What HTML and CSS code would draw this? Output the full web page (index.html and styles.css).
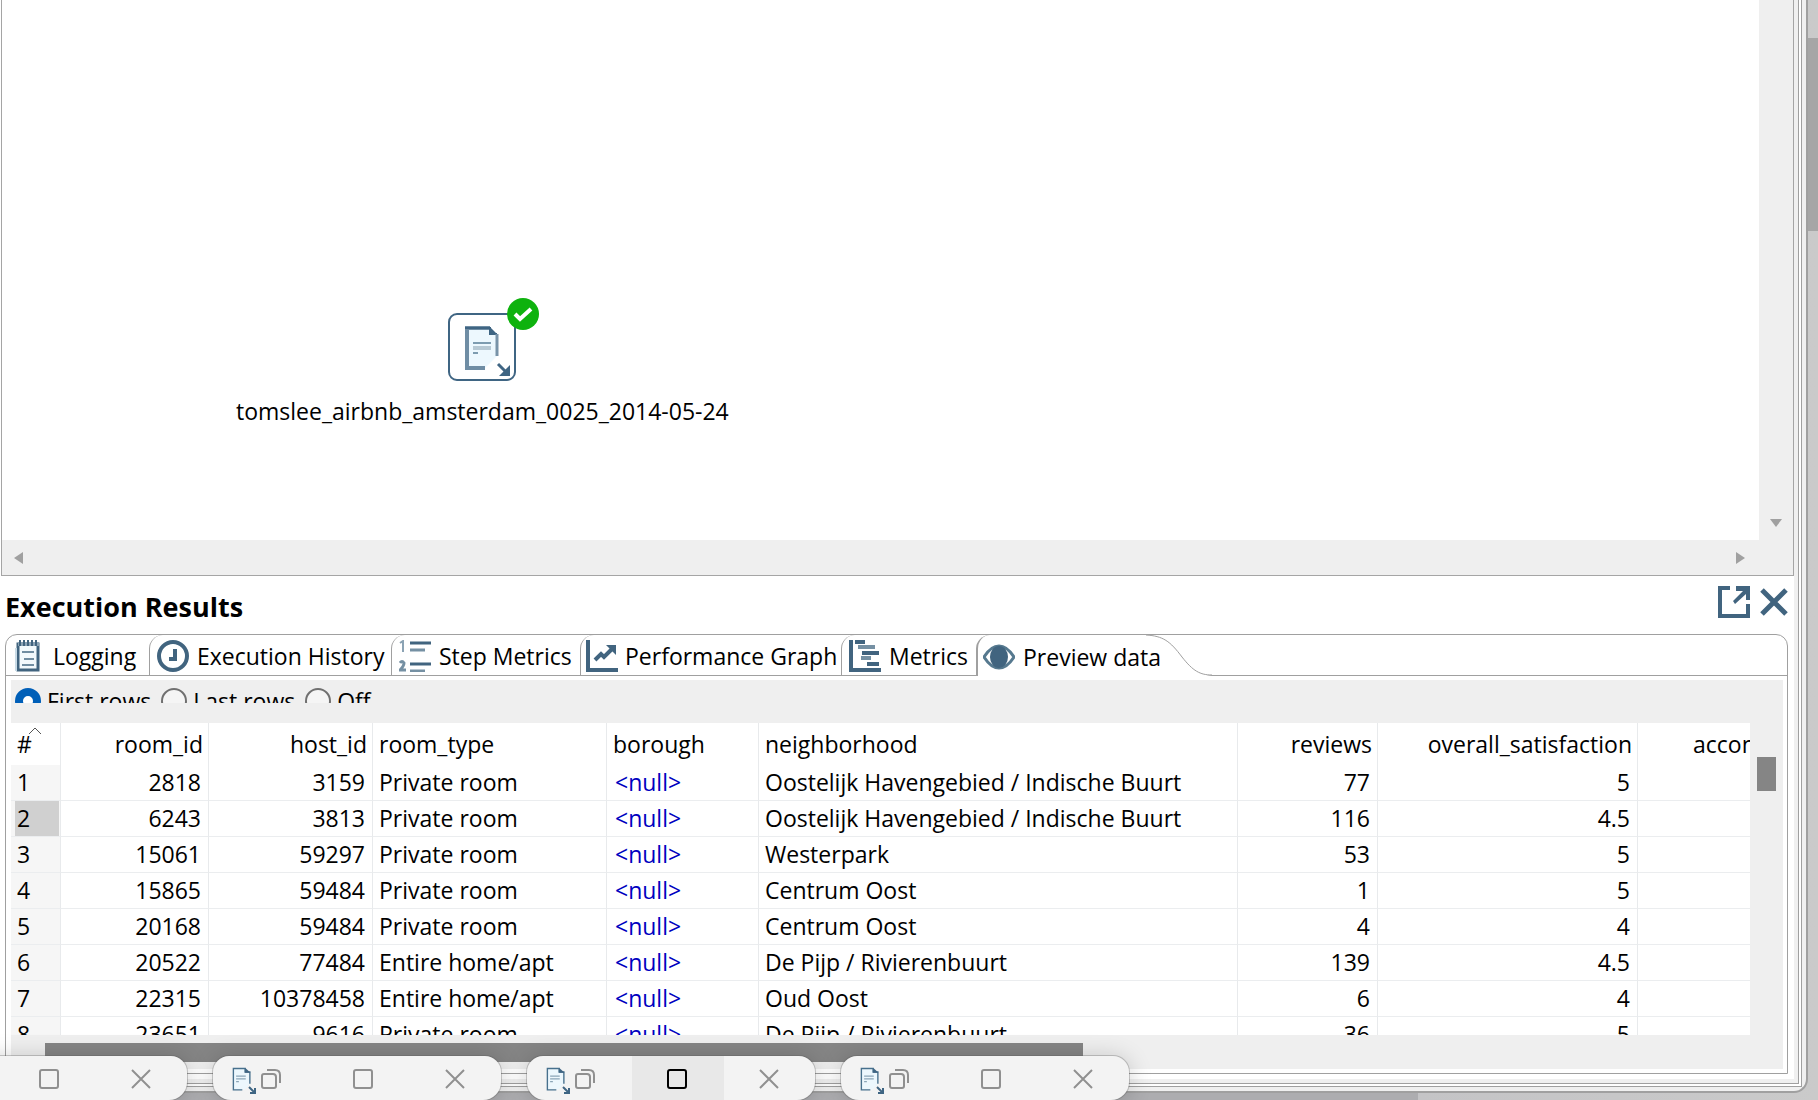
FILE: index.html
```html
<!DOCTYPE html>
<html lang="en">
<head>
<meta charset="utf-8">
<title>Execution Results</title>
<link rel="stylesheet" href="styles.css">
</head>
<body>
<svg class="defs" aria-hidden="true">
  <symbol id="doc" viewBox="0 0 32 36">
    <path d="M2 2H20L26 8V24L18 33H2Z" fill="#ecf7fd"/>
    <path d="M15 33H2V2H19V7H26V24" fill="none" stroke="#47708d" stroke-width="2"/>
    <path d="M19 1L27 8H19Z" fill="#3f6583"/>
    <path d="M6 13H20M6 17H20M6 21H10" fill="none" stroke="#8aa5b7" stroke-width="2"/>
  </symbol>
  <symbol id="copies" viewBox="0 0 20 22">
    <path d="M1 8Q1 6 3 6H12Q15 6 15 9V18Q15 20 13 20H3Q1 20 1 18ZM6 2H14Q19 2 19 7V15" fill="none" stroke="currentColor" stroke-width="2"/>
  </symbol>
  <symbol id="square" viewBox="0 0 20 22">
    <rect x="1" y="2" width="18" height="18" rx="2" fill="none" stroke="currentColor" stroke-width="2"/>
  </symbol>
  <symbol id="cross" viewBox="0 0 20 22">
    <path d="M1 2L19 20M19 2L1 20" fill="none" stroke="currentColor" stroke-width="2"/>
  </symbol>
</svg>

<div class="desktop">
  <main class="window">
    <div class="frame">
      <section class="canvas">
        <div class="canvas-area">
          <div class="node">
            <svg class="node-icon" viewBox="0 0 68 68" aria-hidden="true">
              <rect x="1" y="1" width="66" height="66" rx="8" fill="#fff" stroke="#3f6583" stroke-width="2"/>
              <path d="M18 15H42V20H49V43L36 56H18Z" fill="#edf8fe"/>
              <path d="M37 55H19V15H42" fill="none" stroke="#6f8da4" stroke-width="4"/>
              <path d="M17 15H42V21H49" fill="none" stroke="#3f6583" stroke-width="2"/>
              <path d="M42 14L50 22H41Z" fill="#3f6583"/>
              <path d="M49 21V43" stroke="#7893a8" stroke-width="3"/>
              <path d="M25 30H43" stroke="#7d9cb0" stroke-width="2"/>
              <path d="M25 35H43" stroke="#b7c9d4" stroke-width="4"/>
              <path d="M25 40H30" stroke="#7d9cb0" stroke-width="2"/>
              <path d="M50 51L58 59" stroke="#3f6583" stroke-width="3"/>
              <path d="M62 52V63H51Z" fill="#3f6583"/>
            </svg>
            <svg class="badge" viewBox="0 0 32 32" aria-hidden="true">
              <circle cx="16" cy="16" r="16" fill="#0eb20e"/>
              <path d="M8 16L13 21L24 11" fill="none" stroke="#fff" stroke-width="4"/>
            </svg>
            <span>tomslee_airbnb_amsterdam_0025_2014-05-24</span>
          </div>
        </div>
        <div class="bar-y"><svg width="12" height="9" viewBox="0 0 12 9"><path d="M0 1H12L6 9Z" fill="#a0a0a0"/></svg></div>
        <div class="bar-x">
          <svg width="9" height="12" viewBox="0 0 9 12"><path d="M9 0V12L0 6Z" fill="#a0a0a0"/></svg>
          <svg width="9" height="12" viewBox="0 0 9 12"><path d="M0 0V12L9 6Z" fill="#a0a0a0"/></svg>
        </div>
      </section>

      <header class="results-head">
        <h1>Execution Results</h1>
        <div class="head-tools">
          <button class="tool" aria-label="Detach"><svg width="32" height="32" viewBox="0 0 32 32"><path d="M12 2H2V30H30V18" fill="none" stroke="#41647f" stroke-width="4"/><path d="M18 0H32V14H28V8L17 18L15 15L25 5H18Z" fill="#41647f"/></svg></button>
          <button class="tool" aria-label="Close"><svg width="28" height="32" viewBox="0 0 28 32"><path d="M2 4L26 28M26 4L2 28" stroke="#41647f" stroke-width="5"/></svg></button>
        </div>
      </header>

      <section class="tabbox">
        <nav class="tabs" role="tablist">
          <button class="tab t-log" role="tab"><svg width="28" height="32" viewBox="0 0 28 32"><rect x="3" y="4" width="20" height="26" fill="#f2f9fc" stroke="#41647f" stroke-width="3"/><path d="M1 8V31" stroke="#c9dbe6" stroke-width="2"/><path d="M3 2H24V6H3Z" fill="#8ba3b4"/><path d="M5 0V6M9 0V6M13 0V6M17 0V6M21 0V6" stroke="#41647f" stroke-width="2"/><path d="M7 12H19M9 19H19M7 25H19" stroke="#708da1" stroke-width="2"/></svg>Logging</button>
          <button class="tab t-hist" role="tab"><svg width="32" height="32" viewBox="0 0 32 32"><circle cx="16" cy="16" r="14" fill="#fff" stroke="#41647f" stroke-width="4"/><path d="M18 9V19H12" fill="none" stroke="#41647f" stroke-width="4"/></svg>Execution History</button>
          <button class="tab t-step" role="tab"><svg width="32" height="32" viewBox="0 0 32 32"><path d="M11 3H32M11 24H32" stroke="#41647f" stroke-width="3"/><path d="M11 10H26M11 31H26" stroke="#7590a3" stroke-width="3"/><path d="M1 3L4 1V12" fill="none" stroke="#8ba3b4" stroke-width="2"/><path d="M1 23Q3 20 5 23Q5 26 1 30H7" fill="none" stroke="#7590a3" stroke-width="3"/></svg>Step Metrics</button>
          <button class="tab t-perf" role="tab"><svg width="32" height="32" viewBox="0 0 32 32"><path d="M2 0V30H32" fill="none" stroke="#41647f" stroke-width="4"/><path d="M9 20L15 14L18 17L26 9" fill="none" stroke="#41647f" stroke-width="4"/><path d="M20 5H30V15Z" fill="#41647f"/></svg>Performance Graph</button>
          <button class="tab t-met" role="tab"><svg width="32" height="32" viewBox="0 0 32 32"><path d="M2 0V30H32" fill="none" stroke="#41647f" stroke-width="4"/><path d="M6 2H16M13 13H30M18 24H30" stroke="#41647f" stroke-width="4"/><path d="M9 7H26M12 18H22" stroke="#7590a3" stroke-width="4"/></svg>Metrics</button>
          <button class="tab t-prev active" role="tab" aria-selected="true"><svg width="32" height="32" viewBox="0 0 32 32"><path d="M1 16Q8 5 16 5Q24 5 31 16Q24 27 16 27Q8 27 1 16Z" fill="#fff" stroke="#56798f" stroke-width="3"/><ellipse cx="16" cy="16" rx="9" ry="11" fill="#41647f"/></svg>Preview data</button>
          <svg class="swoop" width="66" height="41" viewBox="0 0 66 41" aria-hidden="true"><path d="M0 0V41H66C54 39 47 35 36 21C24 5 17 0 0 0Z" fill="#fff"/><path d="M0 0C17 1 24 6 36 22C47 36 54 40 66 40" fill="none" stroke="#a0a0a0"/></svg>
        </nav>
        <div class="panel">
          <div class="rows-choice">
            <label><input type="radio" name="rows" checked>First rows</label>
            <label><input type="radio" name="rows">Last rows</label>
            <label><input type="radio" name="rows">Off</label>
          </div>
          <div class="grid-area">
            <div class="grid-clip">
              <table class="grid">
                <colgroup><col class="c-n"><col class="c-room"><col class="c-host"><col class="c-type"><col class="c-bor"><col class="c-hood"><col class="c-rev"><col class="c-sat"><col class="c-acc"></colgroup>
                <thead><tr><th class="first">#<svg class="sort" width="14" height="8" viewBox="0 0 14 8"><path d="M1 7L7 1L13 7" fill="none" stroke="#555"/></svg></th><th class="num">room_id</th><th class="num">host_id</th><th>room_type</th><th>borough</th><th>neighborhood</th><th class="num">reviews</th><th class="num">overall_satisfaction</th><th class="num">accommodates</th></tr></thead>
                <tbody>
                  <tr><td class="first">1</td><td class="num">2818</td><td class="num">3159</td><td>Private room</td><td class="null">&lt;null&gt;</td><td>Oostelijk Havengebied / Indische Buurt</td><td class="num">77</td><td class="num">5</td><td></td></tr>
                  <tr><td class="first current">2</td><td class="num">6243</td><td class="num">3813</td><td>Private room</td><td class="null">&lt;null&gt;</td><td>Oostelijk Havengebied / Indische Buurt</td><td class="num">116</td><td class="num">4.5</td><td></td></tr>
                  <tr><td class="first">3</td><td class="num">15061</td><td class="num">59297</td><td>Private room</td><td class="null">&lt;null&gt;</td><td>Westerpark</td><td class="num">53</td><td class="num">5</td><td></td></tr>
                  <tr><td class="first">4</td><td class="num">15865</td><td class="num">59484</td><td>Private room</td><td class="null">&lt;null&gt;</td><td>Centrum Oost</td><td class="num">1</td><td class="num">5</td><td></td></tr>
                  <tr><td class="first">5</td><td class="num">20168</td><td class="num">59484</td><td>Private room</td><td class="null">&lt;null&gt;</td><td>Centrum Oost</td><td class="num">4</td><td class="num">4</td><td></td></tr>
                  <tr><td class="first">6</td><td class="num">20522</td><td class="num">77484</td><td>Entire home/apt</td><td class="null">&lt;null&gt;</td><td>De Pijp / Rivierenbuurt</td><td class="num">139</td><td class="num">4.5</td><td></td></tr>
                  <tr><td class="first">7</td><td class="num">22315</td><td class="num">10378458</td><td>Entire home/apt</td><td class="null">&lt;null&gt;</td><td>Oud Oost</td><td class="num">6</td><td class="num">4</td><td></td></tr>
                  <tr><td class="first">8</td><td class="num">23651</td><td class="num">9616</td><td>Private room</td><td class="null">&lt;null&gt;</td><td>De Pijp / Rivierenbuurt</td><td class="num">36</td><td class="num">5</td><td></td></tr>
                </tbody>
              </table>
            </div>
            <div class="thumb-y"></div>
          </div>
          <div class="thumb-x"></div>
        </div>
      </section>
    </div>
  </main>
  <div class="outer-thumb"></div>
</div>

<div class="taskbar">
  <div class="mini"><button aria-label="Restore"><svg><use href="#copies"/></svg></button><button aria-label="Maximize"><svg><use href="#square"/></svg></button><button aria-label="Close"><svg><use href="#cross"/></svg></button></div>
  <div class="mini"><svg class="mini-doc"><use href="#doc"/></svg><svg class="mini-arrow" viewBox="0 0 8 8"><path d="M1 1L6 6M7 2V7H2" fill="none" stroke="#3f6583" stroke-width="2"/></svg><button aria-label="Restore"><svg><use href="#copies"/></svg></button><button aria-label="Maximize"><svg><use href="#square"/></svg></button><button aria-label="Close"><svg><use href="#cross"/></svg></button></div>
  <div class="mini"><svg class="mini-doc"><use href="#doc"/></svg><svg class="mini-arrow" viewBox="0 0 8 8"><path d="M1 1L6 6M7 2V7H2" fill="none" stroke="#3f6583" stroke-width="2"/></svg><button aria-label="Restore"><svg><use href="#copies"/></svg></button><button class="hot" aria-label="Maximize"><svg><use href="#square"/></svg></button><button aria-label="Close"><svg><use href="#cross"/></svg></button></div>
  <div class="mini"><svg class="mini-doc"><use href="#doc"/></svg><svg class="mini-arrow" viewBox="0 0 8 8"><path d="M1 1L6 6M7 2V7H2" fill="none" stroke="#3f6583" stroke-width="2"/></svg><button aria-label="Restore"><svg><use href="#copies"/></svg></button><button aria-label="Maximize"><svg><use href="#square"/></svg></button><button aria-label="Close"><svg><use href="#cross"/></svg></button></div>
</div>
</body>
</html>
```
FILE: styles.css
```css
* { box-sizing: border-box; }
html, body { height: 100%; }
body {
  margin: 0;
  overflow: hidden;
  position: relative;
  font-family: "Open Sans", "Noto Sans", sans-serif;
  font-size: 23px;
  line-height: 32px;
  color: #000;
}
button { font: inherit; color: inherit; background: none; border: 0; padding: 0; }
svg { display: block; flex: none; }
.defs { position: absolute; width: 0; height: 0; }

/* desktop and outer window frame */
.desktop {
  height: 100%;
  display: flex;
  padding-bottom: 7px;
  background: linear-gradient(90deg, #adadb0 78%, #c4c4c6 78%, #cacaca);
}
.window {
  flex: 1;
  min-width: 0;
  display: flex;
  background: #f0f0f0;
  border: solid #a0a0a0;
  border-width: 0 2px 2px 0;
  border-radius: 0 0 14px 0;
  padding: 0 4px 4px 0;
}
.frame {
  flex: 1;
  min-width: 0;
  display: flex;
  flex-direction: column;
  background: #fff;
  border-right: 4px double #a0a0a0;
  border-bottom: 4px double #a0a0a0;
  padding: 0 0 4px 1px;
  box-shadow: inset -4px -4px 0 #f0f0f0;
}
.outer-thumb { width: 10px; height: 193px; margin: 38px 0 0; background: #a6a6a6; }

/* drawing canvas */
.canvas {
  flex: 1;
  margin-right: 4px;
  display: grid;
  grid-template-columns: 1fr 34px;
  grid-template-rows: 1fr 35px;
  border: 1px solid #a5a5a5;
  border-top: 0;
  background: #efefef;
}
.canvas-area { position: relative; background: #fff; overflow: hidden; }
.node {
  position: absolute;
  left: 234px;
  top: 313px;
  display: flex;
  flex-direction: column;
  align-items: center;
  gap: 14px;
}
.node-icon { width: 68px; height: 68px; }
.badge { position: absolute; left: 50%; top: -15px; margin-left: 25px; width: 32px; height: 32px; }
.bar-y { display: flex; flex-direction: column; justify-content: flex-end; align-items: center; padding-bottom: 13px; }
.bar-x { display: flex; justify-content: space-between; align-items: center; padding: 0 14px 0 12px; }

/* results heading */
.results-head { display: flex; justify-content: space-between; align-items: flex-end; padding: 10px 10px 11px 4px; }
h1 { margin: 0; font-size: 27px; line-height: 33px; }
.head-tools { display: flex; gap: 10px; padding-bottom: 5px; }

/* tabs */
.tabbox { margin: 0 10px 5px 4px; border: 1px solid #a0a0a0; border-radius: 12px 12px 0 0; padding: 0 4px 4px 5px; }
.tabs {
  display: flex;
  height: 41px;
  margin: 0 -4px 4px -5px;
  border-bottom: 1px solid #a0a0a0;
}
.tab {
  display: flex;
  align-items: center;
  gap: 8px;
  padding-top: 2px;
  padding-left: 7px;
  white-space: nowrap;
  border-left: 1px solid #a0a0a0;
  border-top-left-radius: 14px;
}
.t-log { width: 143px; padding-left: 9px; gap: 10px; border-left: 0; }
.t-hist { width: 242px; }
.t-step { width: 189px; }
.t-perf { width: 261px; padding-left: 5px; gap: 7px; }
.t-met { width: 135px; }
.t-prev { position: relative; z-index: 1; width: 170px; height: 41px; padding-left: 5px; background: #fff; border-left-width: 2px; }
.swoop { height: 41px; }

/* preview panel */
.panel { background: #efefef; padding-bottom: 7px; }
.rows-choice { display: flex; gap: 10px; height: 23px; padding: 6px 4px 0; overflow: hidden; }
.rows-choice label { display: flex; align-items: center; gap: 6px; height: 29px; white-space: nowrap; }
.rows-choice input {
  appearance: none;
  width: 26px;
  height: 26px;
  margin: 0;
  border: 2px solid #707070;
  border-radius: 50%;
  background: #f5f5f5;
}
.rows-choice input:checked { border: 8px solid #005fb8; background: #fff; }
.grid-area { display: flex; gap: 7px; margin-top: 20px; }
.grid-clip { flex: 1; min-width: 0; height: 312px; overflow: hidden; background: #fff; }
.thumb-y { width: 19px; height: 34px; margin: 34px 7px 0 0; background: #858585; }
.thumb-x { width: 1038px; height: 19px; margin: 8px 0 0 34px; background: #858585; }
.grid { table-layout: fixed; width: 1852px; border-collapse: separate; border-spacing: 0; }
.c-n { width: 50px; }
.c-room { width: 148px; }
.c-host { width: 164px; }
.c-type { width: 234px; }
.c-bor { width: 152px; }
.c-hood { width: 479px; }
.c-rev { width: 140px; }
.c-sat { width: 260px; }
.c-acc { width: 225px; }
th, td { padding: 0 7px 0 6px; text-align: left; font-weight: 400; white-space: nowrap; border-right: 1px solid #e8eaec; }
th { height: 42px; padding-right: 5px; }
td { height: 36px; line-height: 35px; border-bottom: 1px solid #ebedef; }
.num { text-align: right; }
.null { color: #0000c0; padding-left: 8px; }
td.first { background: #f6f6f6; }
td.current { background: #d0d0d0; box-shadow: inset 4px 0 0 #f6f6f6, inset -1px 0 0 #f6f6f6; }
.first { position: relative; }
.sort { position: absolute; left: 17px; top: 4px; }

/* floating minimised windows */
.taskbar { position: absolute; left: -101px; bottom: 0; display: flex; gap: 26px; height: 44px; }
.mini {
  position: relative;
  display: flex;
  width: 288px;
  padding: 0 2px 0 13px;
  border-radius: 16px 16px 18px 18px;
  background: #f3f3f3;
  box-shadow: 0 0 0 1px rgba(90, 90, 90, .3), 0 2px 24px rgba(0, 0, 0, .2);
}
.mini button { flex: 1; display: flex; justify-content: center; align-items: center; padding: 2px 3px 0 0; color: #909090; }
.mini button:last-child { padding-right: 0; }
.mini button svg { width: 20px; height: 22px; }
.mini .hot { background: #e8e8e8; color: #000; }
.mini-doc { position: absolute; left: 19px; top: 11px; width: 22px; height: 25px; }
.mini-arrow { position: absolute; left: 35px; top: 30px; width: 8px; height: 8px; }
```
